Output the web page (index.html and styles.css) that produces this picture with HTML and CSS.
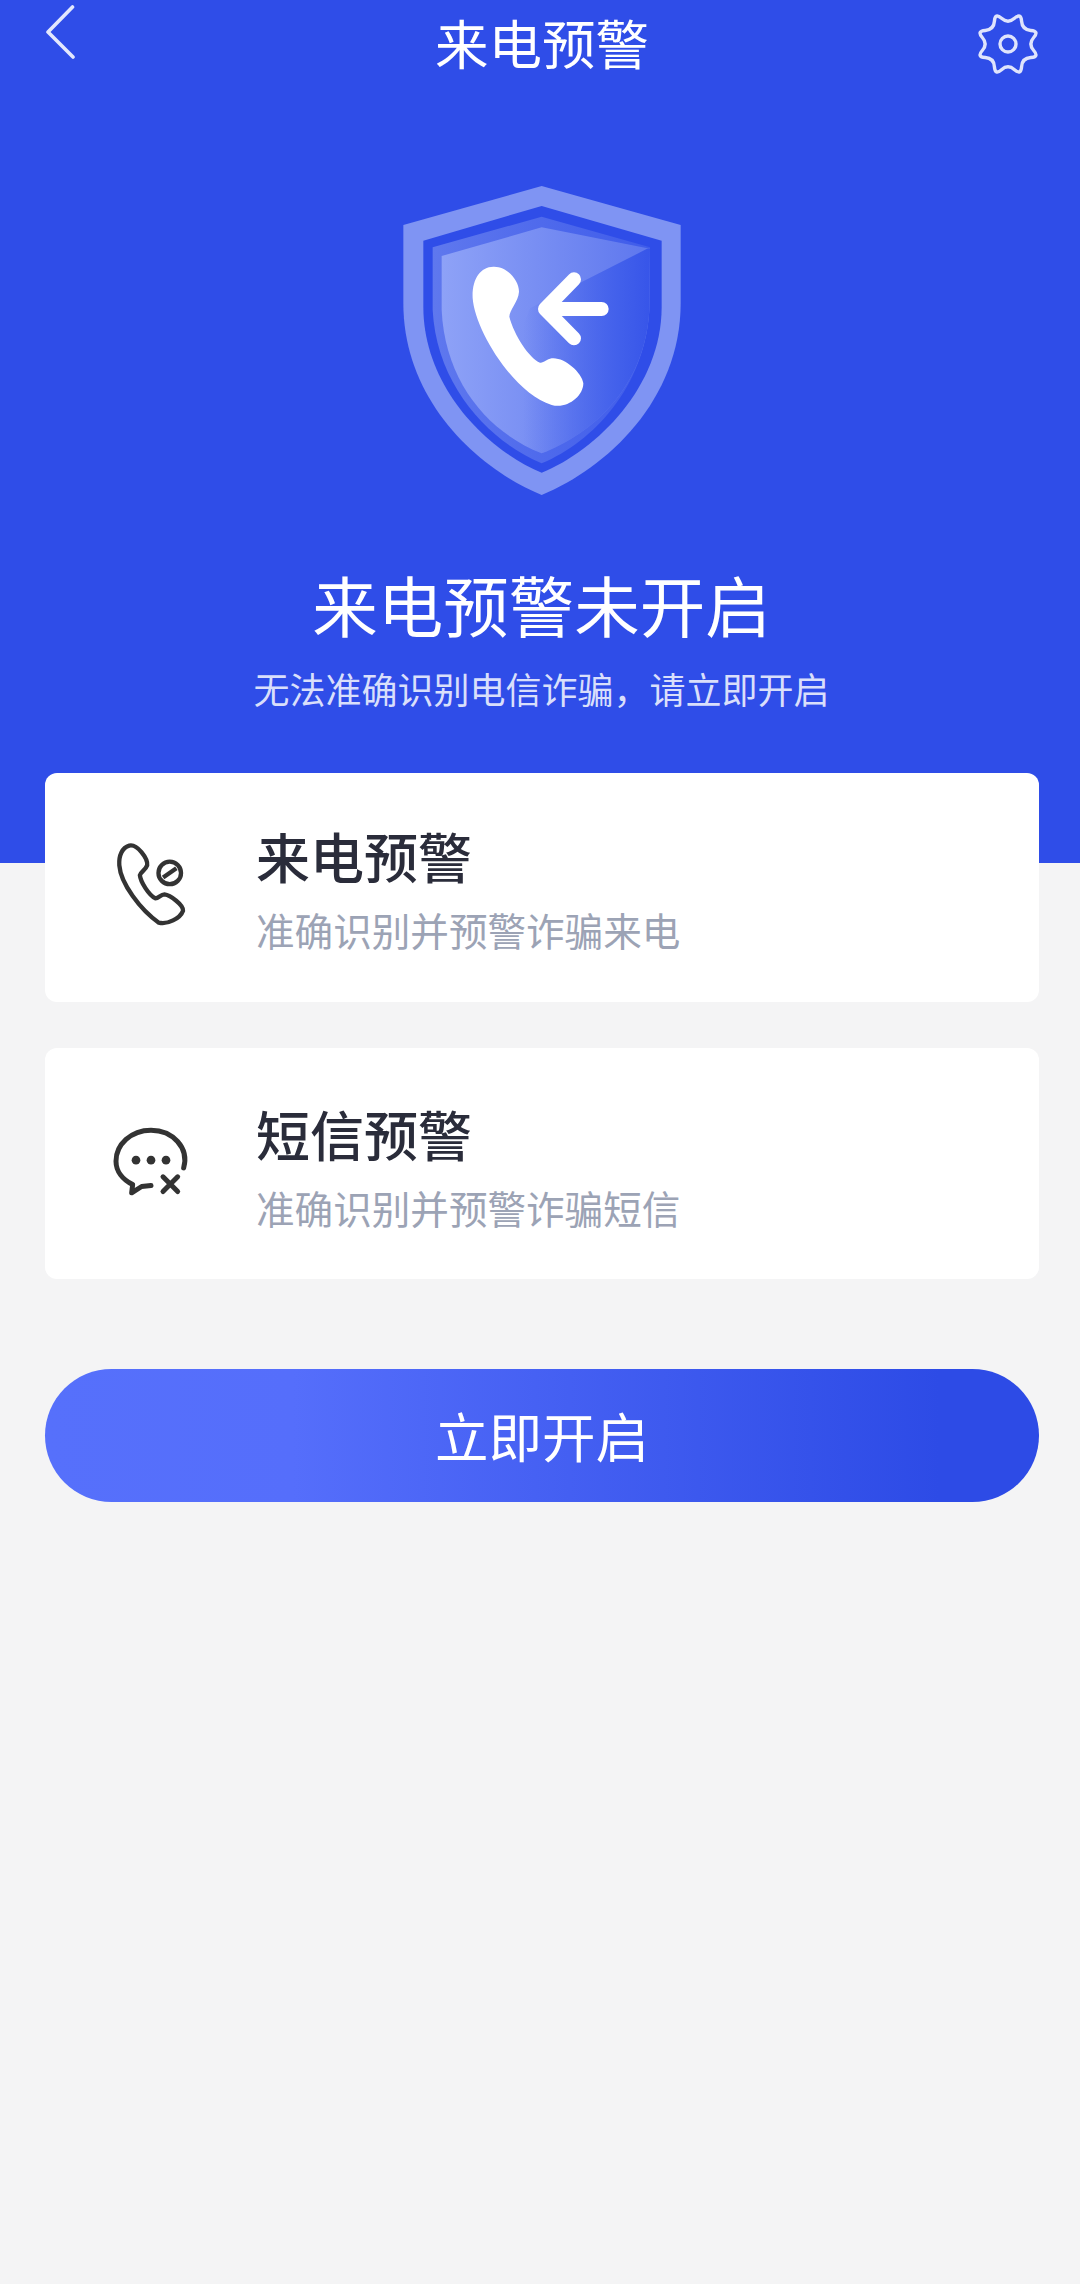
FILE: index.html
```html
<!DOCTYPE html>
<html lang="zh-CN">
<head>
<meta charset="utf-8">
<title>来电预警</title>
<link rel="stylesheet" href="styles.css">
</head>
<body>
<header class="hero">
  <nav class="nav">
    <svg class="back" viewBox="0 0 30 54" width="30" height="54"><path d="M26.5 2 L2 27 L27 52" fill="none" stroke="#e3e8fd" stroke-width="3.6" stroke-linecap="round" stroke-linejoin="round"/></svg>
    <h1 class="nav-title">来电预警</h1>
    <svg class="gear" viewBox="-2 -2 64 64" width="64" height="64"><path d="M36.5 4.3 Q43 -1.4 43.57 7.23 Q44.14 15.86 52.77 16.43 Q61.4 17 55.7 23.5 Q50 30 55.7 36.5 Q61.4 43 52.77 43.57 Q44.14 44.14 43.57 52.77 Q43 61.4 36.5 55.7 Q30 50 23.5 55.7 Q17 61.4 16.43 52.77 Q15.86 44.14 7.23 43.57 Q-1.4 43 4.3 36.5 Q10 30 4.3 23.5 Q-1.4 17 7.23 16.43 Q15.86 15.86 16.43 7.23 Q17 -1.4 23.5 4.3 Q30 10 36.5 4.3 Z" fill="none" stroke="#dfe4fc" stroke-width="3.4" stroke-linejoin="round"/><circle cx="30" cy="30" r="8" fill="none" stroke="#dfe4fc" stroke-width="3.4"/></svg>
  </nav>
  <svg class="shield" viewBox="0 0 1020 1020" width="340" height="340">
    <defs>
      <linearGradient id="faceGrad" gradientUnits="userSpaceOnUse" x1="215" y1="0" x2="835" y2="0">
        <stop offset="0" stop-color="#8ea2f7"/>
        <stop offset="1" stop-color="#5e77ee"/>
      </linearGradient>
      <linearGradient id="darkGrad" gradientUnits="userSpaceOnUse" x1="460" y1="0" x2="840" y2="0">
        <stop offset="0" stop-color="#4562eb" stop-opacity="0"/>
        <stop offset="0.75" stop-color="#4260eb"/>
        <stop offset="1" stop-color="#3755e9"/>
      </linearGradient>
      <linearGradient id="bandGrad" gradientUnits="userSpaceOnUse" x1="188" y1="0" x2="840" y2="0">
        <stop offset="0" stop-color="#5f78ee"/>
        <stop offset="1" stop-color="#3f5cea"/>
      </linearGradient>
      <clipPath id="faceClip">
        <path d="M515 172 L840 236 L838 420 C825 650 670 790 515 850 C360 790 225 640 215 420 L215 258 Z"/>
      </clipPath>
    </defs>
    <path d="M515 48 L932 165 L932 400 C932 690 710 895 515 975 C320 895 100 690 100 400 L100 165 Z" fill="#7f94f3"/>
    <path d="M515 108 L875 212 L875 410 C875 650 680 840 515 908 C350 840 160 650 160 410 L160 212 Z" fill="#2f4de8"/>
    <path d="M515 140 L840 232 L838 420 C825 650 670 815 515 880 C360 815 200 650 188 420 L188 232 Z" fill="url(#bandGrad)"/>
    <path d="M515 172 L840 236 L838 420 C825 650 670 790 515 850 C360 790 225 640 215 420 L215 258 Z" fill="url(#faceGrad)"/>
    <g clip-path="url(#faceClip)"><path d="M840 232 L480 415 L300 880 L860 880 Z" fill="url(#darkGrad)"/></g>
    <path d="M370 290 C330 290 305 330 308 385 C315 480 430 670 545 705 C590 718 640 680 640 640 C635 605 580 560 545 565 C530 568 520 580 510 578 C478 565 432 495 418 440 C418 420 445 395 447 365 C447 330 410 288 370 290 Z" fill="#fff"/>
    <path d="M695 417 L530 417 M612 328 L525 417 L612 505" fill="none" stroke="#fff" stroke-width="42" stroke-linecap="round" stroke-linejoin="round"/>
  </svg>
  <h2 class="hero-title">来电预警未开启</h2>
  <p class="hero-sub">无法准确识别电信诈骗，请立即开启</p>
</header>
<main class="content">
  <section class="card card-first">
    <div class="card-icon">
      <svg viewBox="250 240 220 260" width="73" height="87"><path d="M296 256 C275 262 264 285 266 315 C270 370 330 450 385 488 C410 495 450 475 458 452 C460 435 420 405 402 403 C390 403 385 415 375 415 C355 405 330 365 328 345 C330 335 345 330 350 315 C352 295 320 250 296 256 Z" fill="none" stroke="#333" stroke-width="13" stroke-linejoin="round"/><circle cx="418" cy="338" r="34" fill="none" stroke="#333" stroke-width="13"/><path d="M398 352 L438 324" stroke="#333" stroke-width="13"/></svg>
    </div>
    <div class="card-text">
      <h3 class="card-title">来电预警</h3>
      <p class="card-sub">准确识别并预警诈骗来电</p>
    </div>
  </section>
  <section class="card">
    <div class="card-icon">
      <svg viewBox="240 280 240 215" width="80" height="72"><path d="M458 405 C475 345 425 292 360 292 C300 292 255 335 255 385 C255 415 275 440 305 455 L302 480 L332 461 L360 458" fill="none" stroke="#333" stroke-width="15" stroke-linecap="round" stroke-linejoin="round"/><circle cx="315" cy="382" r="13" fill="#333"/><circle cx="360" cy="382" r="13" fill="#333"/><circle cx="405" cy="382" r="13" fill="#333"/><path d="M396 432 L440 476 M440 432 L396 476" stroke="#333" stroke-width="15" stroke-linecap="round"/></svg>
    </div>
    <div class="card-text">
      <h3 class="card-title">短信预警</h3>
      <p class="card-sub">准确识别并预警诈骗短信</p>
    </div>
  </section>
  <button class="action" type="button">立即开启</button>
</main>
</body>
</html>
```

FILE: styles.css
```css
* { box-sizing: border-box; }
html, body { margin: 0; padding: 0; }
body {
  width: 1080px;
  height: 2284px;
  overflow: hidden;
  background: #f4f4f5;
  font-family: "Noto Sans CJK SC", "Noto Sans", sans-serif;
}
h1, h2, h3, p { margin: 0; font-weight: 400; }

.hero {
  height: 863px;
  background: #2f4de8;
  display: flex;
  flex-direction: column;
  align-items: center;
  color: #fff;
}
.nav {
  width: 100%;
  height: 90px;
  padding: 0 40px 0 44px;
  display: grid;
  grid-template-columns: 1fr auto 1fr;
  align-items: start;
}
.back { margin: 5px 0 0 2px; }
.gear { margin-top: 12px; justify-self: end; }
.nav-title { font-size: 53.5px; line-height: 84px; }
.shield { margin-top: 80px; display: block; }
.hero-title { margin-top: 54px; margin-left: 3px; font-size: 65.5px; line-height: 80px; }
.hero-sub { margin-top: 19px; margin-left: 3px; font-size: 36px; line-height: 50px; color: #d9dffb; }

.content {
  margin-top: -90px;
  padding: 0 41px 0 45px;
  display: flex;
  flex-direction: column;
  gap: 46px;
}
.card {
  display: flex;
  align-items: center;
  padding: 51px 0 47px;
  background: #fff;
  border-radius: 12px;
}
.card-first { padding: 48px 0 48px; }
.card-icon {
  width: 211px;
  padding-bottom: 8px;
  display: flex;
  justify-content: center;
  flex: none;
}
.card-title { font-size: 54px; line-height: 70px; font-weight: 500; color: #2a2c3a; }
.card-sub { margin-top: 13px; font-size: 38.6px; line-height: 50px; color: #9ca3b5; }

.action {
  margin-top: 44px;
  height: 133px;
  padding: 0 0 2px;
  border: 0;
  border-radius: 67px;
  background: linear-gradient(90deg, #5670fb 0%, #556efb 25%, #2d4be6 90%);
  color: #fff;
  font-family: inherit;
  font-size: 53.5px;
}
```
